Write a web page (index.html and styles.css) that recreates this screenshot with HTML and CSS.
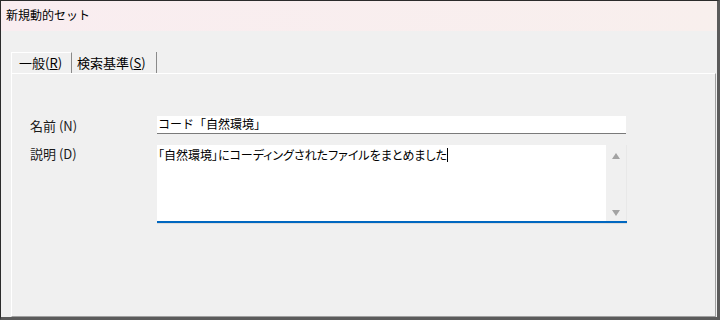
FILE: index.html
```html
<!DOCTYPE html>
<html lang="ja">
<head>
  <meta charset="UTF-8">
  <title>新規動的セット</title>
  <link rel="stylesheet" href="styles.css">
</head>
<body>
  <div class="window">
    <div class="titlebar">新規動的セット</div>
    <div class="dialog">
      <div class="tabs">
        <div class="tab active">一般(<u>R</u>)</div>
        <div class="tab">検索基準(<u>S</u>)</div>
      </div>
      <div class="panel">
        <div class="row">
          <label class="label">名前 (N)</label>
          <div class="input">コード「自然環境」</div>
        </div>
        <div class="row">
          <label class="label">説明 (D)</label>
          <div class="textarea">
            <div class="text">「自然環境」にコーディングされたファイルをまとめました<span class="caret"></span></div>
            <div class="scrollbar">
              <span class="arrow up"></span>
              <span class="arrow down"></span>
            </div>
          </div>
        </div>
      </div>
    </div>
  </div>
</body>
</html>
```

FILE: styles.css
```css
body {
  margin: 0;
  padding: 0;
  font-family: "Noto Sans CJK JP", "Noto Sans", sans-serif;
  font-size: 12px;
  color: #000;
  background: #f0f0f0;
}

.window {
  width: 720px;
  height: 320px;
  box-sizing: border-box;
  border-top: 1px solid #2b2b2b;
  border-left: 1px solid #2b2b2b;
  border-right: 3px solid #5b5b5b;
  border-bottom: 3px solid #5b5b5b;
  background: #f0f0f0;
  display: flex;
  flex-direction: column;
}

.titlebar {
  height: 30px;
  line-height: 28px;
  padding-left: 5px;
  background: linear-gradient(to right, #f9edf0, #f8efed);
}

.dialog {
  flex: 1;
  display: flex;
  flex-direction: column;
  padding: 21px 1px 0 10px;
}

.tabs {
  display: flex;
  height: 21px;
}

.tab {
  box-sizing: border-box;
  height: 21px;
  line-height: 21px;
  font-size: 13px;
  border-right: 1px solid #8a8a8a;
}

.tab.active {
  width: 61px;
  padding-left: 7px;
  border-top: 1px solid #fff;
  border-left: 1px solid #fff;
  line-height: 19px;
}

.tab:not(.active) {
  width: 85px;
  padding-left: 5px;
}

.tab u {
  text-underline-offset: 1px;
}

.panel {
  flex: 1;
  border-top: 1px solid #fff;
  border-left: 1px solid #fff;
  border-right: 1px solid #a0a0a0;
  border-bottom: 1px solid #a0a0a0;
  padding: 42px 0 0 18px;
}

.row {
  display: flex;
  align-items: flex-start;
  margin-bottom: 11px;
}

.label {
  width: 127px;
  flex-shrink: 0;
  font-size: 13px;
  color: #1a1a1a;
  padding-top: 2px;
  line-height: 16px;
}

.row:nth-child(2) .label {
  padding-top: 1px;
}

.input {
  box-sizing: border-box;
  width: 469px;
  height: 18px;
  line-height: 16px;
  padding-left: 1px;
  background: #fff;
  border-bottom: 1px solid #7a7a7a;
}

.textarea {
  box-sizing: border-box;
  width: 470px;
  height: 78px;
  display: flex;
  background: #fff;
  border-bottom: 2px solid #0067c0;
  box-shadow: 0 1px 0 #dcdcdc;
}

.text {
  flex: 1;
  padding: 1px 0 0 1px;
  line-height: 18px;
  font-feature-settings: "palt";
}

.caret {
  display: inline-block;
  width: 1px;
  height: 14px;
  background: #000;
  vertical-align: -2px;
}

.scrollbar {
  width: 20px;
  background: #f0f0f0;
  border-right: 1px solid #e8e8e8;
  position: relative;
}

.arrow {
  position: absolute;
  left: 6px;
  width: 0;
  height: 0;
  border-left: 4px solid transparent;
  border-right: 4px solid transparent;
}

.arrow.up {
  top: 8px;
  border-bottom: 6px solid #a3a3a3;
}

.arrow.down {
  bottom: 5px;
  border-top: 6px solid #a3a3a3;
}
```
